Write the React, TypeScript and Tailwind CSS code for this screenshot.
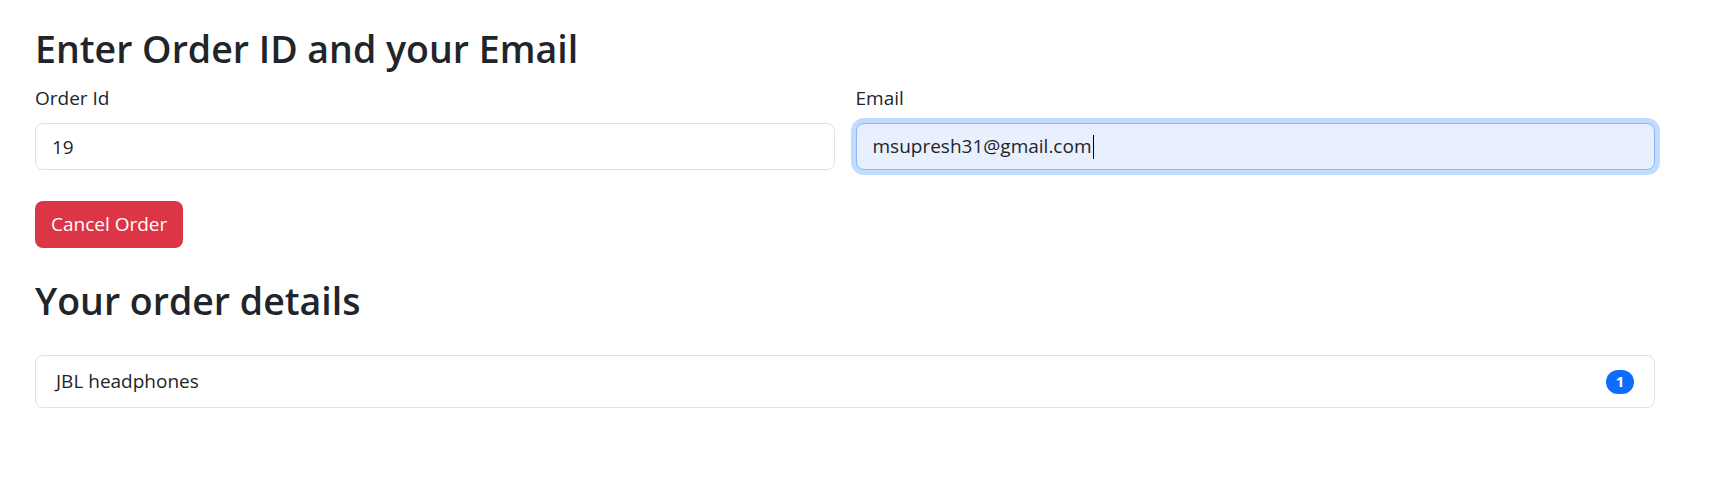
import React from 'react';

const font = { fontFamily: '"Open Sans", "Noto Sans", sans-serif' };

export default function App() {
  const orderId = '19';
  const email = 'msupresh31@gmail.com';
  const items = [{ name: 'JBL headphones', qty: 1 }];

  return (
    <div style={font} className="min-h-[480px] bg-white pl-[35px] pr-[59px] pt-[25px] text-[#212529]">
      <h2 className="mb-[10px] text-[37.5px] font-semibold leading-[48px]">Enter Order ID and your Email</h2>

      <div className="grid grid-cols-2 gap-x-[21px]">
        <div>
          <label className="mb-[10px] block text-[19px] leading-[30px]">Order Id</label>
          <input
            readOnly
            value={orderId}
            className="block h-[47px] w-full rounded-[8px] border border-[#dee2e6] bg-white px-[16px] text-[19px] text-[#212529] outline-none"
          />
        </div>
        <div>
          <label className="mb-[10px] block text-[19px] leading-[30px]">Email</label>
          {/* focused field, caret drawn after the text */}
          <div className="flex h-[47px] w-full items-center rounded-[8px] border border-[#86b7fe] bg-[#e8f0fe] px-[16px] text-[19px] shadow-[0_0_0_5px_rgba(13,110,253,0.25)]">
            <span>{email}</span>
            <span className="ml-px inline-block h-[24px] w-px bg-black" />
          </div>
        </div>
      </div>

      <button className="mt-[31px] h-[47px] rounded-[8px] bg-[#dc3545] px-[16px] text-[19px] text-white">
        Cancel Order
      </button>

      <h2 className="mt-[29px] mb-[10px] text-[37.5px] font-semibold leading-[48px]">Your order details</h2>

      <ul className="mt-[30px] rounded-[8px] border border-[#dee2e6]">
        {items.map((item) => (
          <li key={item.name} className="flex h-[51px] items-center justify-between px-[20px] text-[19px]">
            <span>{item.name}</span>
            <span className="flex h-[24px] min-w-[28px] items-center justify-center rounded-full bg-[#0d6efd] px-[9px] text-[15px] font-bold leading-none text-white">
              {item.qty}
            </span>
          </li>
        ))}
      </ul>
    </div>
  );
}
